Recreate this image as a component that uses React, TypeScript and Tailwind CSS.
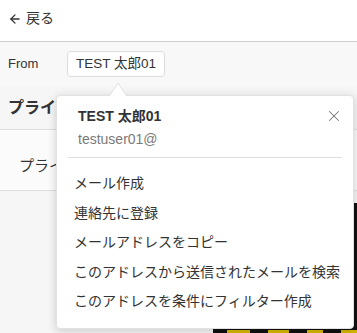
import { ArrowLeft, X } from "lucide-react";

const menuItems = [
  "メール作成",
  "連絡先に登録",
  "メールアドレスをコピー",
  "このアドレスから送信されたメールを検索",
  "このアドレスを条件にフィルター作成",
];

export default function App() {
  return (
    <div className="relative w-[357px] h-[333px] overflow-hidden bg-[#f6f6f6] text-[#333] font-['Liberation_Sans','Noto_Sans_CJK_JP',sans-serif]">
      {/* Top bar */}
      <div className="h-[42px] bg-white border-b border-[#cfcfcf] flex items-center pl-[8px] pb-[4px] gap-[4px] text-[14px]">
        <ArrowLeft size={14} strokeWidth={2.2} />
        <span>戻る</span>
      </div>

      {/* From */}
      <div className="h-[44px] flex items-center pl-[8px] bg-[#f8f8f8]">
        <span className="w-[59px] text-[13px]">From</span>
        <button className="h-[26px] px-[8px] bg-white border border-[#dcdcdc] rounded-[4px] text-[13.5px] leading-none">
          TEST 太郎01
        </button>
      </div>

      {/* Subject */}
      <div className="h-[44px] flex items-center pl-[8px] bg-[#f6f6f6] border-b border-[#dedede]">
        <span className="text-[16px] font-bold whitespace-nowrap">プライベート</span>
      </div>

      <div className="h-[61px] flex items-center pl-[19px] pt-[12px] bg-[#fbfbfb] border-b border-[#dedede]">
        <span className="text-[15px] whitespace-nowrap">プライベート</span>
      </div>

      {/* Attachment preview behind popup */}
      <div className="ml-[213px] mt-[12px] h-[130px] bg-[#111] flex items-end gap-[18px] pl-[14px]">
        <div className="w-[26px] h-[3px] bg-[#d8b800]" />
        <div className="w-[24px] h-[3px] bg-[#d8b800]" />
        <div className="w-[18px] h-[3px] bg-[#d8b800]" />
        <div className="w-[18px] h-[3px] bg-[#d8b800]" />
      </div>

      {/* Popup */}
      <div className="absolute left-[56px] top-[95px] w-[298px] h-[234px] bg-white rounded-[4px] border border-[#e2e2e2] shadow-[0_2px_10px_rgba(0,0,0,0.18)]">
        <svg
          className="absolute left-[52px] top-[-14px]"
          width="18"
          height="15"
          viewBox="0 0 18 15"
        >
          <path d="M0 14.5 L9 1 L18 14.5" fill="white" stroke="#e2e2e2" strokeWidth="1" />
          <rect x="0" y="14" width="18" height="2" fill="white" />
        </svg>

        <div className="px-[21px] pt-[10px]">
          <div className="flex items-center justify-between h-[20px]">
            <span className="text-[14px] font-bold text-[#333]">TEST 太郎01</span>
            <X size={18} strokeWidth={1.4} className="text-[#777] mr-[-11px]" />
          </div>
          <div className="mt-[3px] text-[14px] text-[#7a7a7a]">testuser01@</div>
        </div>

        <div className="mx-[11px] mt-[7px] border-t border-[#dedede]" />

        <ul className="pl-[17px] pt-[11px] text-[14px] text-[#333]">
          {menuItems.map((item) => (
            <li key={item} className="h-[29.5px] flex items-center whitespace-nowrap">
              {item}
            </li>
          ))}
        </ul>
      </div>
    </div>
  );
}
